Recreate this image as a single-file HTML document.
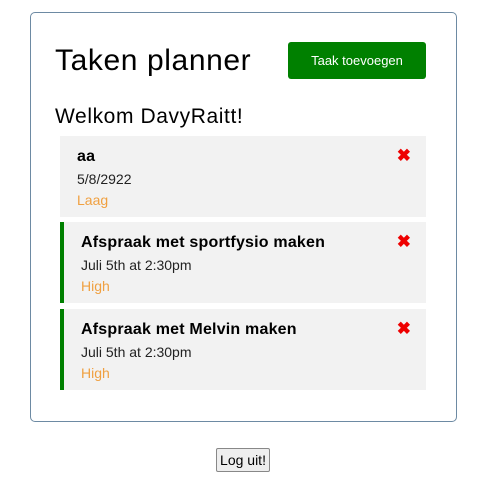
<!DOCTYPE html>
<html><head><style>
*{box-sizing:border-box}
body{margin:0;width:489px;height:500px;background:#fff;font-family:"Liberation Sans",sans-serif;position:relative;color:#000}
.box{position:absolute;left:30px;top:12px;width:427px;height:410px;border:1px solid #6d8aa3;border-radius:5px}
h1{position:absolute;left:55px;top:44px;margin:0;font-size:30px;font-weight:normal;letter-spacing:0.6px}
.btn{position:absolute;left:288px;top:42px;width:138px;height:37px;background:#008000;border-radius:3px;color:#fff;font-size:13px;display:flex;align-items:center;justify-content:center}
h2{position:absolute;left:55px;top:105px;margin:0;font-size:21px;font-weight:normal;letter-spacing:0.6px}
.task{position:absolute;left:60px;width:366px;height:81px;background:#f2f2f2}
.task.r{border-left:4px solid #008000}
.t{position:absolute;top:12px;font-size:16px;font-weight:bold;letter-spacing:0.2px}
.d{position:absolute;top:35px;font-size:14px;color:#222}
.p{position:absolute;top:56px;font-size:14px;color:#f0a040}
.x{position:absolute;right:15px;top:10px;color:#e00;font-size:17px;font-weight:bold}
.lo{position:absolute;left:216px;top:448px;width:54px;height:24px;border:1px solid #888;border-radius:2px;background:#eee;font-size:14px;display:flex;align-items:center;justify-content:center}
</style></head><body>
<div class="box"></div>
<h1>Taken planner</h1>
<div class="btn">Taak toevoegen</div>
<h2>Welkom DavyRaitt!</h2>
<div class="task" style="top:136px"><div class="t" style="left:17px">aa</div><div class="d" style="left:17px">5/8/2922</div><div class="p" style="left:17px">Laag</div><div class="x">✖</div></div>
<div class="task r" style="top:222px"><div class="t" style="left:17px">Afspraak met sportfysio maken</div><div class="d" style="left:17px">Juli 5th at 2:30pm</div><div class="p" style="left:17px">High</div><div class="x">✖</div></div>
<div class="task r" style="top:309px"><div class="t" style="left:17px">Afspraak met Melvin maken</div><div class="d" style="left:17px">Juli 5th at 2:30pm</div><div class="p" style="left:17px">High</div><div class="x">✖</div></div>
<div class="lo">Log uit!</div>
</body></html>
